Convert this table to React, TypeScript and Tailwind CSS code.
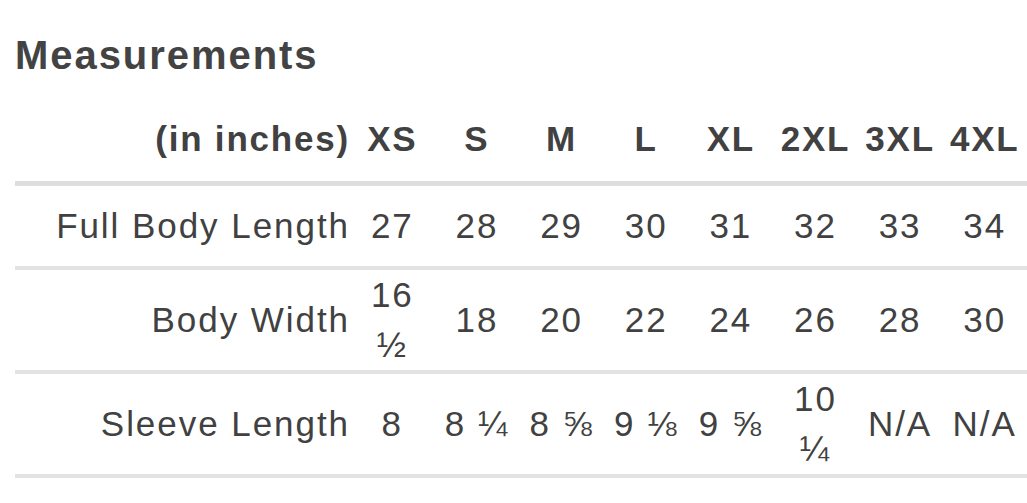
import React from "react";

const sizes = ["XS", "S", "M", "L", "XL", "2XL", "3XL", "4XL"];

const rows: { label: string; values: string[][] }[] = [
  {
    label: "Full Body Length",
    values: [["27"], ["28"], ["29"], ["30"], ["31"], ["32"], ["33"], ["34"]],
  },
  {
    label: "Body Width",
    values: [["16", "½"], ["18"], ["20"], ["22"], ["24"], ["26"], ["28"], ["30"]],
  },
  {
    label: "Sleeve Length",
    values: [["8"], ["8 ¼"], ["8 ⅝"], ["9 ⅛"], ["9 ⅝"], ["10", "¼"], ["N/A"], ["N/A"]],
  },
];

export default function App() {
  return (
    <div className="w-[1027px] h-[503px] bg-white overflow-hidden pl-[15px] pt-[31px] text-[#414141] font-['Liberation_Sans',Arial,Helvetica,sans-serif]">
      <h2 className="text-[40px] leading-[48px] font-bold tracking-[1.95px] text-[#434343]">
        Measurements
      </h2>

      <div className="mt-[35px] grid grid-cols-[335px_repeat(8,minmax(0,1fr))] pb-[17px] border-b-[5px] border-[#dedede] text-[35px] leading-[50px] font-bold tracking-[1.8px]">
        <div className="text-right">(in inches)</div>
        {sizes.map((s) => (
          <div key={s} className="text-center">
            {s}
          </div>
        ))}
      </div>

      {rows.map((r) => (
        <div
          key={r.label}
          className="grid grid-cols-[335px_repeat(8,minmax(0,1fr))] items-center min-h-[84px] border-b-[4px] border-[#e3e3e3] text-[35px] leading-[50px] tracking-[1.95px]"
        >
          <div className="text-right">{r.label}</div>
          {r.values.map((v, i) => (
            <div key={i} className="flex flex-col items-center text-center">
              {v.map((line, j) => (
                <span key={j}>{line}</span>
              ))}
            </div>
          ))}
        </div>
      ))}
    </div>
  );
}
